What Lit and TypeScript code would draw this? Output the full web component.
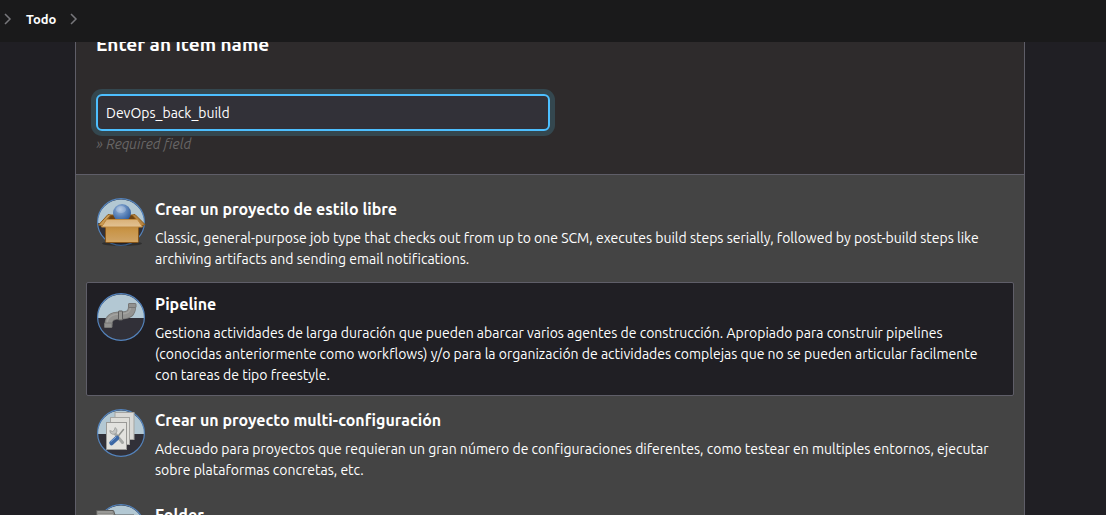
import { LitElement, html, css, svg } from "lit";
import { customElement, property, state } from "lit/decorators.js";

type IconName = "freestyle" | "pipeline" | "matrix" | "folder";

interface JobType {
  icon: IconName;
  title: string;
  description: string;
}

const JOB_TYPES: JobType[] = [
  {
    icon: "freestyle",
    title: "Crear un proyecto de estilo libre",
    description:
      "Classic, general-purpose job type that checks out from up to one SCM, executes build steps serially, followed by post-build steps like archiving artifacts and sending email notifications.",
  },
  {
    icon: "pipeline",
    title: "Pipeline",
    description:
      "Gestiona actividades de larga duración que pueden abarcar varios agentes de construcción. Apropiado para construir pipelines (conocidas anteriormente como workflows) y/o para la organización de actividades complejas que no se pueden articular facilmente con tareas de tipo freestyle.",
  },
  {
    icon: "matrix",
    title: "Crear un proyecto multi-configuración",
    description:
      "Adecuado para proyectos que requieran un gran número de configuraciones diferentes, como testear en multiples entornos, ejecutar sobre plataformas concretas, etc.",
  },
  { icon: "folder", title: "Folder", description: "" },
];

const GLYPHS = {
  freestyle: svg`
    <defs>
      <radialGradient id="ball" cx="0.4" cy="0.3" r="0.7">
        <stop offset="0" stop-color="#a3bddd" />
        <stop offset="0.5" stop-color="#6289bd" />
        <stop offset="1" stop-color="#2f5a98" />
      </radialGradient>
      <linearGradient id="box" x1="0" y1="0" x2="0" y2="1">
        <stop offset="0" stop-color="#b07c33" />
        <stop offset="0.45" stop-color="#c99548" />
        <stop offset="1" stop-color="#cfa468" />
      </linearGradient>
      <linearGradient id="flap" x1="0" y1="0" x2="0" y2="1">
        <stop offset="0" stop-color="#d9b077" />
        <stop offset="1" stop-color="#e2c394" />
      </linearGradient>
    </defs>
    <ellipse cx="25" cy="45.500" rx="20" ry="2.500" fill="#000" opacity="0.3" />
    <path d="M9 23 L14 17 H35 L41 23Z" fill="#6e4210" stroke="#9a6219" />
    <path d="M8.500 23 L14 17 L11 16.500 L1.500 27 L6 28.500Z" fill="#c99a54" stroke="#8f5d1b" />
    <path d="M40.500 23 L35 17 L38 16.500 L48 26.500 L43.500 28.500Z" fill="#b58340" stroke="#8f5d1b" />
    <circle cx="25" cy="15" r="9" fill="url(#ball)" />
    <ellipse cx="24" cy="11.500" rx="5" ry="3.500" fill="#fff" opacity="0.2" />
    <rect x="8.500" y="23" width="33" height="21.500" rx="1" fill="url(#box)" stroke="#85551a" />
    <path d="M9.500 21.500 H40.500 L45.500 29 H4.500Z" fill="url(#flap)" stroke="#c08b42" />
    <path d="M10 43 H40" stroke="#dba95c" />`,
  pipeline: svg`
    <path d="M11.500 31.500 C11.500 24.500 15 22.500 23.500 22.500 C31 22.500 35 20.500 35 14"
      fill="none" stroke="#747472" stroke-width="8" />
    <path d="M11.500 31.500 C11.500 24.500 15 22.500 23.500 22.500 C31 22.500 35 20.500 35 14"
      fill="none" stroke="#939391" stroke-width="6.500" />
    <path d="M10 31 C10 24.500 15 21 24 21 C31 21 33.500 18 33.500 14"
      fill="none" stroke="#a9a9a6" stroke-width="1.500" opacity="0.7" />
    <rect x="21.500" y="18" width="4" height="9" rx="0.500" fill="#999996" stroke="#5f5f5f" />
    <rect x="7.500" y="30" width="7.500" height="4.500" rx="0.500" fill="#929290" stroke="#777775" />
    <rect x="31.500" y="10.500" width="7.500" height="4" rx="0.500" fill="#929290" stroke="#777775" />`,
  matrix: svg`
    <rect x="18" y="3.500" width="19" height="27" fill="#d9d9d6" stroke="#a5a5a2" />
    <rect x="13.500" y="8.500" width="19" height="27" fill="#deded9" stroke="#a5a5a2" />
    <rect x="9.500" y="13.500" width="20" height="27" fill="#e2e2de" stroke="#9a9a97" />
    <path d="M17.500 24 L25.500 33.500" stroke="#a5a8a5" stroke-width="3" stroke-linecap="round" />
    <path d="M18 18.500 A3.600 3.600 0 1 1 12.800 21.500 L15.500 22.500 L17.500 21Z" fill="#c3c5c3" stroke="#9a9d9a" stroke-width="0.800" />
    <path d="M26.500 20.500 L20 28.500" stroke="#8d908d" stroke-width="1.500" stroke-linecap="round" />
    <path d="M20 29 L14.500 34" stroke="#3c68a5" stroke-width="4.500" stroke-linecap="round" />
    <path d="M19 28 L14 32.500" stroke="#84a9d9" stroke-width="1" stroke-linecap="round" />`,
  folder: svg`
    <path d="M4.500 20 V7 Q4.500 6.500 5 6.500 H21 Q22 6.500 22 8 L23 11 H42 V36 H5Z" transform="translate(-5 0)" fill="#8b8b88" stroke="#5d5d5b" />
    <path d="M1 8 H15.500 M1 10.500 H16" stroke="#a5a5a2" />`,
};

@customElement("job-icon")
export class JobIcon extends LitElement {
  @property() name: IconName = "freestyle";

  static styles = css`
    :host {
      display: block;
      flex: none;
      width: 48px;
      height: 48px;
    }
    .icon {
      display: block;
      width: 100%;
      height: 100%;
      overflow: visible;
    }
  `;

  render() {
    return html`<svg class="icon" viewBox="0 0 48 48" aria-hidden="true">
      <circle cx="24" cy="24" r="23.500" fill="#313038" />
      <path d="M0.500 25 a23.500 23.500 0 0 1 47 0Z" fill="#b3c8d3" />
      <circle cx="24" cy="24" r="23.400" fill="none" stroke="#5484bd" stroke-width="1.200" />
      ${GLYPHS[this.name]}
    </svg>`;
  }
}

@customElement("app-root")
export class AppRoot extends LitElement {
  @state() private itemName = "DevOps_back_build";
  @state() private selected: IconName = "pipeline";

  static styles = css`
    :host {
      display: block;
      position: relative;
      height: 100vh;
      overflow: hidden;
      background: #201f24;
      color: #fff;
      font: 14px/21px Ubuntu, "Noto Sans", sans-serif;
      text-rendering: optimizeSpeed;
    }
    * {
      box-sizing: border-box;
    }
    .breadcrumbs {
      position: absolute;
      inset: 0 0 auto;
      z-index: 1;
      display: flex;
      align-items: center;
      gap: 14px;
      height: 42px;
      padding: 0 4px 4px;
      background: #1a1a1b;
    }
    .crumb {
      color: inherit;
      font-size: 13px;
      font-weight: 600;
      text-decoration: none;
    }
    .chevron {
      width: 8px;
      height: 12px;
      fill: none;
      stroke: #77777b;
      stroke-width: 1.5;
    }
    .page {
      padding-right: 6px;
    }
    .panel {
      max-width: 950px;
      margin: 0 auto;
      border: solid #5f5e68;
      border-width: 0 1px;
      background: #444;
    }
    .name-section {
      padding: 34px 20px 19px;
      border-bottom: 1px solid #5f5e68;
      background: #2e2b2c;
    }
    .heading {
      display: block;
      margin-bottom: 39px;
      font-size: 19px;
      font-weight: 700;
    }
    .name-input {
      display: block;
      width: 50%;
      height: 37px;
      padding: 0 8px;
      border: 2px solid #4dbfff;
      border-radius: 6px;
      outline: none;
      background: #323138;
      box-shadow: 0 0 0 5px #34474f;
      color: #fff;
      font: inherit;
      text-rendering: inherit;
    }
    .hint {
      margin: 3px 0 0;
      color: #686666;
      font-style: italic;
    }
    .types {
      display: flex;
      flex-direction: column;
      gap: 2px;
      margin: 0;
      padding: 12px 10px;
      list-style: none;
    }
    .type {
      display: flex;
      gap: 10px;
      width: 100%;
      padding: 10px 10px 9px;
      border: 1px solid transparent;
      border-radius: 2px;
      background: none;
      color: inherit;
      font: inherit;
      text-align: left;
      text-rendering: inherit;
    }
    .type.selected {
      border-color: #5f5e68;
      background: #201f24;
    }
    .text {
      display: flex;
      flex-direction: column;
      gap: 7px;
    }
    .title {
      font-size: 16px;
      font-weight: 700;
      line-height: 23px;
    }
  `;

  private chevron() {
    return html`<svg class="chevron" viewBox="0 0 8 12" aria-hidden="true">
      <path d="M1 1 L6 6 L1 11" />
    </svg>`;
  }

  render() {
    return html`
      <nav class="breadcrumbs" aria-label="Breadcrumb">
        ${this.chevron()}<a class="crumb" href="#">Todo</a>${this.chevron()}
      </nav>
      <main class="page">
        <div class="panel">
          <section class="name-section">
            <label class="heading" for="name">Enter an item name</label>
            <input
              class="name-input"
              id="name"
              type="text"
              aria-describedby="hint"
              .value=${this.itemName}
              @input=${(e: Event) => (this.itemName = (e.target as HTMLInputElement).value)}
            />
            <p class="hint" id="hint">» Required field</p>
          </section>
          <ul class="types">
            ${JOB_TYPES.map(
              (job) => html`<li>
                <button
                  type="button"
                  class="type ${job.icon === this.selected ? "selected" : ""}"
                  aria-pressed=${job.icon === this.selected}
                  @click=${() => (this.selected = job.icon)}
                >
                  <job-icon .name=${job.icon}></job-icon>
                  <span class="text">
                    <span class="title">${job.title}</span>
                    <span class="description">${job.description}</span>
                  </span>
                </button>
              </li>`,
            )}
          </ul>
        </div>
      </main>
    `;
  }
}
